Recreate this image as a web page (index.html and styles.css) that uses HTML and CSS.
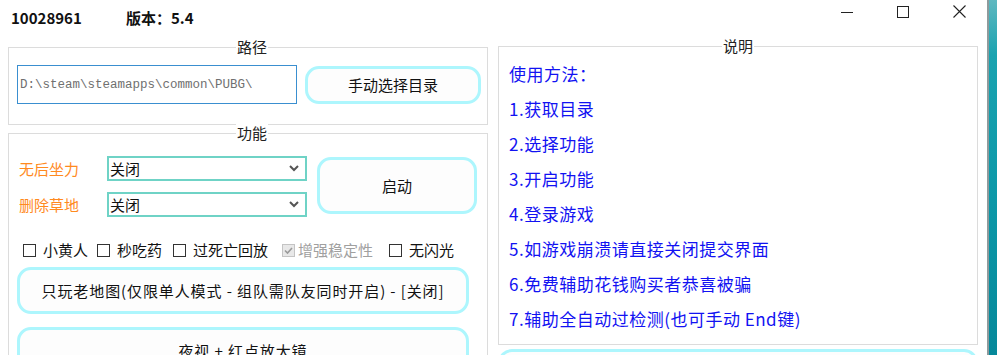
FILE: index.html
```html
<!DOCTYPE html>
<html lang="zh-CN">
<head>
    <meta charset="UTF-8">
    <title>10028961</title>
    <link rel="stylesheet" href="styles.css">
</head>
<body>
    <div class="window">
        <div class="titlebar">
            <span class="title-id">10028961</span>
            <span class="title-ver">版本：5.4</span>
            <div class="controls">
                <span class="ctrl">
                    <svg width="12" height="12" viewBox="0 0 12 12"><path d="M0 6.5h12" stroke="#222" stroke-width="1"/></svg>
                </span>
                <span class="ctrl">
                    <svg width="12" height="12" viewBox="0 0 12 12"><rect x="0.5" y="0.5" width="11" height="11" fill="none" stroke="#222" stroke-width="1"/></svg>
                </span>
                <span class="ctrl">
                    <svg width="13" height="13" viewBox="0 0 13 13"><path d="M0.5 0.5l12 12M12.5 0.5l-12 12" stroke="#222" stroke-width="1.1"/></svg>
                </span>
            </div>
        </div>

        <div class="content">
            <div class="col">
                <div class="group path-group">
                    <div class="group-title">路径</div>
                    <div class="path-row">
                        <div class="textbox">D:\steam\steamapps\common\PUBG\</div>
                        <div class="btn btn-dir">手动选择目录</div>
                    </div>
                </div>

                <div class="group func-group">
                    <div class="group-title">功能</div>
                    <div class="func-row">
                        <div class="options">
                            <div class="option">
                                <span class="opt-label">无后坐力</span>
                                <div class="select">
                                    <span>关闭</span>
                                    <svg width="10" height="7" viewBox="0 0 10 7"><path d="M1 1l4 4 4-4" fill="none" stroke="#555" stroke-width="2"/></svg>
                                </div>
                            </div>
                            <div class="option">
                                <span class="opt-label">删除草地</span>
                                <div class="select">
                                    <span>关闭</span>
                                    <svg width="10" height="7" viewBox="0 0 10 7"><path d="M1 1l4 4 4-4" fill="none" stroke="#555" stroke-width="2"/></svg>
                                </div>
                            </div>
                        </div>
                        <div class="btn btn-start">启动</div>
                    </div>

                    <div class="checks">
                        <label class="check"><span class="box"></span>小黄人</label>
                        <label class="check"><span class="box"></span>秒吃药</label>
                        <label class="check"><span class="box"></span>过死亡回放</label>
                        <label class="check disabled">
                            <span class="box">
                                <svg width="11" height="11" viewBox="0 0 11 11"><path d="M2 5.5l2.5 2.5 4.5-5" fill="none" stroke="#9a9a9a" stroke-width="1.6"/></svg>
                            </span>增强稳定性
                        </label>
                        <label class="check"><span class="box"></span>无闪光</label>
                    </div>

                    <div class="btn btn-wide">只玩老地图(仅限单人模式 - 组队需队友同时开启) - [关闭]</div>
                    <div class="btn btn-wide btn-next">夜视 + 红点放大镜</div>
                </div>
            </div>

            <div class="col">
                <div class="group help-group">
                    <div class="group-title">说明</div>
                    <ul class="help">
                        <li>使用方法：</li>
                        <li>1.获取目录</li>
                        <li>2.选择功能</li>
                        <li>3.开启功能</li>
                        <li>4.登录游戏</li>
                        <li>5.如游戏崩溃请直接关闭提交界面</li>
                        <li>6.免费辅助花钱购买者恭喜被骗</li>
                        <li>7.辅助全自动过检测(也可手动 End键)</li>
                    </ul>
                </div>
                <div class="btn btn-bottom"></div>
            </div>
        </div>
    </div>
    <div class="desktop"></div>
</body>
</html>
```

FILE: styles.css
```css
body {
    margin: 0;
    width: 997px;
    height: 355px;
    overflow: hidden;
    display: flex;
    font-family: "Noto Sans CJK SC", "Noto Sans", sans-serif;
    color: #1a1a1a;
    background: #ffffff;
}
.window {
    width: 987px;
    flex: none;
    background: #ffffff;
}
.desktop {
    flex: 1;
    border-left: 2px solid #8e9a9c;
    background: linear-gradient(#5fb8c0 0, #1aa3b0 55px, #0c98a8 200px, #06889a 355px);
}

/* title bar */
.titlebar {
    height: 34px;
    display: flex;
    align-items: center;
    padding-left: 11px;
    font-size: 15px;
    font-weight: bold;
    color: #111;
}
.title-id {
    width: 115px;
}
.controls {
    margin-left: auto;
    display: flex;
    align-self: stretch;
}
.ctrl {
    width: 56px;
    display: flex;
    align-items: center;
    justify-content: center;
    padding-bottom: 11px;
}

/* layout */
.content {
    display: flex;
    gap: 10px;
    padding-left: 8px;
}
.col {
    width: 480px;
}
.group {
    border: 1px solid #dcdcdc;
    box-sizing: border-box;
}
.group-title {
    display: table;
    margin: -10px auto 0;
    padding: 0 1px;
    line-height: 18px;
    font-size: 15px;
    background: #ffffff;
    color: #222;
}

/* buttons */
.btn {
    box-sizing: border-box;
    border: 3px solid #adf6fd;
    border-radius: 14px;
    background: #fdfdfd;
    display: flex;
    align-items: center;
    justify-content: center;
    font-size: 15px;
    color: #111;
}

/* path */
.path-group {
    margin-top: 13px;
    padding: 0 0 20px 8px;
}
.path-row {
    display: flex;
    align-items: center;
    gap: 8px;
    margin-top: 9px;
}
.textbox {
    width: 280px;
    height: 39px;
    box-sizing: border-box;
    border: 1px solid #3a8fd0;
    padding-left: 2px;
    display: flex;
    align-items: center;
    font-family: "Liberation Mono", monospace;
    font-size: 12.5px;
    color: #707070;
}
.btn-dir {
    width: 176px;
    height: 38px;
}

/* functions */
.func-group {
    margin-top: 8px;
    height: 240px;
    padding-left: 8px;
}
.func-row {
    display: flex;
    gap: 10px;
    margin-top: 14px;
    padding-left: 2px;
}
.options {
    display: flex;
    flex-direction: column;
    gap: 11px;
}
.option {
    display: flex;
    align-items: center;
}
.opt-label {
    width: 88px;
    font-size: 15px;
    color: #ff8a1e;
}
.select {
    width: 200px;
    height: 25px;
    box-sizing: border-box;
    border: 2px solid #6fd3c6;
    display: flex;
    align-items: center;
    justify-content: space-between;
    padding: 0 6px 0 1px;
    font-size: 15px;
    color: #111;
}
.btn-start {
    width: 160px;
    height: 57px;
    margin-top: 1px;
}
.checks {
    display: grid;
    grid-template-columns: 74px 76px 109px 107px auto;
    margin: 24px 0 0 6px;
    height: 18px;
    align-items: center;
}
.check {
    display: flex;
    align-items: center;
    gap: 7px;
    font-size: 15px;
    line-height: 18px;
    color: #111;
}
.box {
    width: 13px;
    height: 13px;
    box-sizing: border-box;
    border: 1px solid #333;
    background: #fff;
    display: flex;
    align-items: center;
    justify-content: center;
}
.check.disabled {
    color: #a0a0a0;
    gap: 3px;
}
.check.disabled .box {
    border-color: #c4c4c4;
    background: #e8e8e8;
}
.btn-wide {
    width: 452px;
    height: 47px;
    margin-top: 8px;
    letter-spacing: 0.9px;
}
.btn-next {
    margin-top: 13px;
}

/* help */
.help-group {
    margin-top: 12px;
    height: 299px;
}
.help {
    list-style: none;
    margin: 1px 0 0;
    padding: 0 0 0 10px;
}
.help li {
    line-height: 35px;
    font-size: 17px;
    letter-spacing: 0.5px;
    color: #1212f2;
}
.btn-bottom {
    margin-top: 4px;
    height: 40px;
}
```
